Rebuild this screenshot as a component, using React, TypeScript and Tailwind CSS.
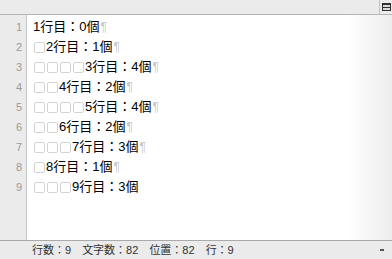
import React from 'react';

const lines: { indent: number; text: string }[] = [
  { indent: 0, text: '1行目：0個' },
  { indent: 1, text: '2行目：1個' },
  { indent: 4, text: '3行目：4個' },
  { indent: 2, text: '4行目：2個' },
  { indent: 4, text: '5行目：4個' },
  { indent: 2, text: '6行目：2個' },
  { indent: 3, text: '7行目：3個' },
  { indent: 1, text: '8行目：1個' },
  { indent: 3, text: '9行目：3個' },
];

const font = { fontFamily: '"Liberation Sans", "Noto Sans CJK JP", sans-serif' };

const Space = () => (
  <span className="inline-flex w-[13px] h-[13px] items-center justify-center align-[-1px]">
    <span className="w-[11px] h-[11px] border border-[#d4d4d4] rounded-[2px]" />
  </span>
);

const App: React.FC = () => {
  return (
    <div className="w-[392px] h-[259px] flex flex-col bg-white overflow-hidden" style={font}>
      {/* toolbar */}
      <div className="h-[15px] flex bg-[#ebebeb] border-b border-[#b4b4b4]">
        <div className="flex-1" />
        <div className="w-[13px] border-l border-[#c4c4c4] flex items-start justify-end pt-[3px] pr-[1px]">
          <div className="w-[9px] h-[8px] bg-[#2e2e2e] flex flex-col justify-center gap-[1px] px-[1px]">
            <div className="h-[2px] bg-[#d8d8d8]" />
            <div className="h-[2px] bg-[#d8d8d8]" />
          </div>
        </div>
      </div>

      {/* editor */}
      <div className="flex-1 flex min-h-0">
        <div className="w-[27px] bg-[#ebebeb] border-r border-[#c8c8c8] pt-[2px] pr-[4px] text-right text-[11px] text-[#9a9a9a]">
          {lines.map((_, i) => (
            <div key={i} className="h-[20px] leading-[20px]">{i + 1}</div>
          ))}
        </div>
        <div className="flex-1 pt-[2px] pl-[6px] text-[13px] text-black bg-gradient-to-r from-white from-[88%] to-[#ececec]">
          {lines.map((l, i) => (
            <div key={i} className="h-[20px] leading-[20px] whitespace-nowrap flex items-center">
              {Array.from({ length: l.indent }).map((_, j) => (
                <Space key={j} />
              ))}
              <span>{l.text}</span>
              {i < lines.length - 1 && (
                <span className="text-[12px] text-[#c8c8c8] ml-[1px]">¶</span>
              )}
            </div>
          ))}
        </div>
      </div>

      {/* status bar */}
      <div className="h-[19px] bg-[#ebebeb] border-t border-[#aaaaaa] flex items-center pl-[32px] pr-[8px] text-[11px] text-[#333]">
        <span>行数：9</span>
        <span className="ml-[11px]">文字数：82</span>
        <span className="ml-[11px]">位置：82</span>
        <span className="ml-[11px]">行：9</span>
        <div className="flex-1" />
        <div className="w-[4px] h-[2px] bg-[#555]" />
      </div>
    </div>
  );
};

export default App;
